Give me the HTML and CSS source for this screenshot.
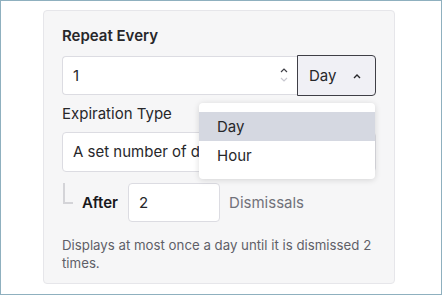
FILE: index.html
```html
<!DOCTYPE html>
<html lang="en">
<head>
    <meta charset="UTF-8">
    <title>Message Frequency</title>
    <link rel="stylesheet" href="styles.css">
</head>
<body>
    <div class="panel">
        <label class="field-label strong" for="repeat-count">Repeat Every</label>
        <div class="repeat-row">
            <div class="number-input">
                <input type="text" id="repeat-count" value="1">
                <span class="spinner">
                    <svg width="10" height="20" viewBox="0 0 10 20">
                        <path d="M2 7 L5 4 L8 7" fill="none" stroke="#3f3f46" stroke-width="1.2"/>
                        <path d="M2 13 L5 16 L8 13" fill="none" stroke="#c8c8d0" stroke-width="1.2"/>
                    </svg>
                </span>
            </div>
            <div class="unit-select">
                <button class="unit-button">
                    Day
                    <svg width="10" height="8" viewBox="0 0 10 8">
                        <path d="M2 6 L5 3 L8 6" fill="none" stroke="#27272a" stroke-width="1.4"/>
                    </svg>
                </button>
                <ul class="menu">
                    <li class="active">Day</li>
                    <li>Hour</li>
                </ul>
            </div>
        </div>

        <label class="field-label" for="expiration">Expiration Type</label>
        <div class="select-box" id="expiration">A set number of dismissals</div>

        <div class="after-row">
            <span class="branch"></span>
            <span class="after-label">After</span>
            <input type="text" class="small-input" value="2">
            <span class="unit-text">Dismissals</span>
        </div>

        <p class="help">Displays at most once a day until it is dismissed 2 times.</p>
    </div>
</body>
</html>
```

FILE: styles.css
```css
* {
    box-sizing: border-box;
}
html, body {
    margin: 0;
    height: 100%;
}
body {
    font-family: Inter, "Noto Sans", sans-serif;
    color: #18181b;
    background: #fff;
    border: 1px solid #8fb0bf;
    padding: 9px 0 0 42px;
}
.panel {
    width: 352px;
    height: 274px;
    background: #f6f6f7;
    border: 1px solid #e6e6ea;
    border-radius: 4px;
    padding: 15px 18px 0 18px;
}
.field-label {
    display: block;
    font-size: 15px;
    line-height: 20px;
    color: #27272a;
    margin-bottom: 8px;
}
.field-label.strong {
    font-weight: 600;
    margin-bottom: 9px;
}
.repeat-row {
    display: flex;
    margin-bottom: 8px;
}
.number-input {
    position: relative;
    width: 237px;
    height: 39px;
    margin-top: 1px;
}
.number-input input {
    width: 100%;
    height: 100%;
    border: 1px solid #dcdce2;
    border-right: none;
    border-radius: 4px 0 0 4px;
    background: #fff;
    font-family: inherit;
    font-size: 15px;
    color: #27272a;
    padding: 0 10px;
    outline: none;
}
.spinner {
    position: absolute;
    right: 8px;
    top: 9px;
    display: flex;
}
.unit-select {
    position: relative;
}
.unit-button {
    display: flex;
    align-items: center;
    gap: 16px;
    width: 79px;
    height: 41px;
    background: #f0f0f5;
    border: 1px solid #3f3f46;
    border-radius: 0 4px 4px 0;
    font-family: inherit;
    font-size: 15px;
    color: #27272a;
    padding: 0 0 0 11px;
}
.menu {
    position: absolute;
    top: 48px;
    right: 1px;
    width: 176px;
    margin: 0;
    padding: 9px 0;
    list-style: none;
    background: #fff;
    border-radius: 4px;
    box-shadow: 0 1px 6px rgba(0, 0, 0, 0.14);
    z-index: 2;
}
.menu li {
    height: 29px;
    line-height: 29px;
    padding-left: 18px;
    font-size: 15px;
    color: #27272a;
}
.menu li.active {
    background: #d5d8e1;
}
.select-box {
    width: 314px;
    height: 40px;
    background: #fff;
    border: 1px solid #dcdce2;
    border-radius: 4px;
    font-size: 15px;
    line-height: 38px;
    color: #27272a;
    padding: 0 10px;
    white-space: nowrap;
    overflow: hidden;
}
.after-row {
    display: flex;
    align-items: center;
    margin-top: 11px;
    height: 39px;
}
.branch {
    align-self: flex-start;
    width: 10px;
    height: 21px;
    border-left: 2px solid #d4d4d8;
    border-bottom: 2px solid #d4d4d8;
    margin-left: 1px;
    margin-right: 9px;
}
.after-label {
    font-weight: 600;
    font-size: 15px;
    color: #18181b;
    margin-right: 10px;
}
.small-input {
    width: 92px;
    height: 39px;
    border: 1px solid #dcdce2;
    border-radius: 4px;
    background: #fff;
    font-family: inherit;
    font-size: 15px;
    color: #27272a;
    padding: 0 10px;
    outline: none;
}
.unit-text {
    font-size: 15px;
    color: #71717a;
    margin-left: 9px;
}
.help {
    margin: 14px 0 0;
    font-size: 13.25px;
    line-height: 18px;
    color: #5f5f68;
    width: 314px;
}
```
